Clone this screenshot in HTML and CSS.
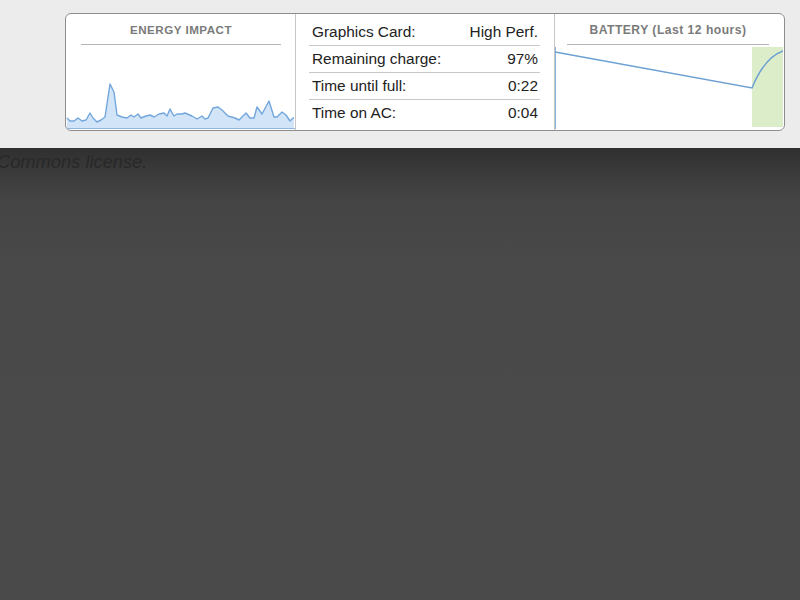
FILE: index.html
```html
<!DOCTYPE html>
<html>
<head>
<meta charset="utf-8">
<link rel="stylesheet" href="styles.css">
</head>
<body>
<div class="top">
  <div class="panel">
    <section class="energy">
      <div class="title">ENERGY IMPACT</div>
      <svg class="echart" width="229" height="84" viewBox="66 45 229 84">
        <polygon class="efill" points="67,128 67,118 70,121 74,121 78,118 82,121 86,120 90,113 93,118 97,122 101,120 105,117 110,84 114,92 117,115 122,117 127,118 131,115 134,117 138,114 141,118 146,116 150,115 154,117 159,114 164,113 167,116 170,109 174,116 177,114 182,114 185,113 192,116 197,119 202,116 205,119 208,118 213,108 218,107 222,110 228,116 235,118 239,120 246,113 250,118 254,118 257,107 262,114 269,101 274,117 277,117 282,112 286,115 290,121 293,118 294,118 294,128"/>
        <polyline class="eline" points="67,118 70,121 74,121 78,118 82,121 86,120 90,113 93,118 97,122 101,120 105,117 110,84 114,92 117,115 122,117 127,118 131,115 134,117 138,114 141,118 146,116 150,115 154,117 159,114 164,113 167,116 170,109 174,116 177,114 182,114 185,113 192,116 197,119 202,116 205,119 208,118 213,108 218,107 222,110 228,116 235,118 239,120 246,113 250,118 254,118 257,107 262,114 269,101 274,117 277,117 282,112 286,115 290,121 293,118 294,118"/>
        <line class="ebase" x1="66" y1="128.5" x2="295" y2="128.5"/>
      </svg>
    </section>
    <section class="stats">
      <div class="row"><span>Graphics Card:</span><span>High Perf.</span></div>
      <div class="row"><span>Remaining charge:</span><span>97%</span></div>
      <div class="row"><span>Time until full:</span><span>0:22</span></div>
      <div class="row"><span>Time on AC:</span><span>0:04</span></div>
    </section>
    <section class="battery">
      <div class="title">BATTERY (Last 12 hours)</div>
      <svg class="bchart" width="228" height="82" viewBox="555 47 228 82">
        <rect class="charging" x="752" y="47" width="31" height="80"/>
        <line class="baxis" x1="555.5" y1="47" x2="555.5" y2="129"/>
        <path class="bline" d="M555,52 L752,88 Q764,58 783,51"/>
      </svg>
    </section>
  </div>
</div>
<div class="dark">
  <p class="license">Commons license.</p>
</div>
</body>
</html>
```

FILE: styles.css
```css
html, body {
  margin: 0;
  padding: 0;
}
body {
  width: 800px;
  height: 600px;
  overflow: hidden;
  background: #484848;
  font-family: "Liberation Sans", Arial, sans-serif;
}
.top {
  height: 135px;
  padding-top: 13px;
  background: #ececec;
}
.panel {
  margin-left: 65px;
  width: 718px;
  height: 116px;
  border: 1px solid #8e8e8e;
  border-radius: 6px;
  background: #fff;
  display: flex;
  overflow: hidden;
}
.energy {
  width: 229px;
  display: flex;
  flex-direction: column;
}
.title {
  font-size: 11.6px;
  font-weight: bold;
  letter-spacing: 0.5px;
  color: #7a7a7a;
  text-align: center;
  line-height: 16px;
  padding-top: 8px;
  padding-bottom: 6px;
  border-bottom: 1px solid #b4b4b4;
}
.energy .title {
  margin: 0 14px 0 15px;
}
.battery .title {
  font-size: 12.1px;
  margin: 0 14px 0 12px;
}
.echart, .bchart {
  display: block;
}
.efill {
  fill: #d2e5f8;
}
.eline {
  fill: none;
  stroke: #72a6dc;
  stroke-width: 1.4;
  stroke-linejoin: round;
}
.ebase {
  stroke: #8fb6de;
  stroke-width: 1;
}
.stats {
  width: 260px;
  border-left: 1px solid #c6c6c6;
  border-right: 1px solid #c6c6c6;
  padding: 5px 14px 0 13px;
  box-sizing: border-box;
}
.row {
  display: flex;
  justify-content: space-between;
  height: 26px;
  line-height: 26px;
  padding: 0 2px 0 3px;
  font-size: 15.4px;
  color: #222;
  border-bottom: 1px solid #c8c8c8;
}
.row:last-child {
  border-bottom: none;
}
.battery {
  width: 228px;
  display: flex;
  flex-direction: column;
}
.bchart {
  margin-top: 2px;
}
.charging {
  fill: #dcedc9;
}
.baxis {
  stroke: #8db3da;
  stroke-width: 1;
}
.bline {
  fill: none;
  stroke: #6c9fd3;
  stroke-width: 1.5;
}
.dark {
  height: 452px;
  background: linear-gradient(#2f2f2f 0px, #3b3b3b 25px, #454545 55px, #494949 120px, #4a4a4a 452px);
}
.license {
  margin: 0;
  padding-top: 3px;
  margin-left: -3px;
  font-size: 18.3px;
  font-style: italic;
  line-height: 22px;
  color: #282828;
}
```
